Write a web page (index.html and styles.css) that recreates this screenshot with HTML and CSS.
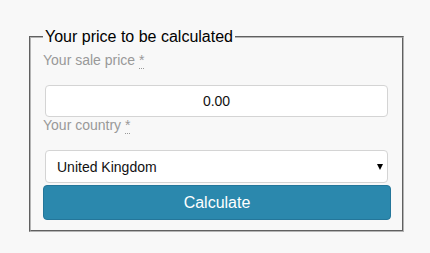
FILE: index.html
```
<!DOCTYPE html>
<html>
<head>
<meta charset="utf-8">
<link rel="stylesheet" href="styles.css">
</head>
<body>
<div class="page">
  <form class="calc">
    <fieldset class="box">
      <legend class="box-title">Your price to be calculated</legend>
      <label class="field-label" for="price">Your sale price <abbr class="req" title="required">*</abbr></label>
      <input class="field-input" id="price" type="text" value="0.00">
      <label class="field-label" for="country">Your country <abbr class="req" title="required">*</abbr></label>
      <div class="select-wrap">
        <select class="field-select" id="country">
          <option>United Kingdom</option>
        </select>
      </div>
      <button class="btn" type="button">Calculate</button>
    </fieldset>
  </form>
</div>
</body>
</html>
```
FILE: styles.css
```
html, body {
  margin: 0;
  padding: 0;
  background: #f8f8f8;
}
body {
  font-family: "Liberation Sans", Arial, sans-serif;
  width: 430px;
  height: 253px;
  overflow: hidden;
}
.page {
  padding: 28px 0 0 29px;
}
.calc {
  margin: 0;
}
.box {
  box-sizing: border-box;
  width: 375px;
  margin: 0;
  padding: 6px 11px 10px 12px;
  border: 2px groove #b4b4b4;
  min-width: 0;
}
.box-title {
  font-size: 16px;
  line-height: 18px;
  color: #000;
  padding: 0 2px;
  margin: 0;
}
.field-label {
  display: block;
  font-size: 14px;
  line-height: 16px;
  color: #999;
  margin-bottom: 17px;
}
.req {
  text-decoration: none;
  border-bottom: 1px dotted #999;
  cursor: help;
}
.field-input,
.field-select {
  box-sizing: border-box;
  display: block;
  width: 343px;
  margin: 0 0 0 2px;
  background: #fff;
  border: 1px solid #d4d4d4;
  border-radius: 4px;
  font-family: "Liberation Sans", Arial, sans-serif;
  font-size: 14px;
  color: #111;
  outline: none;
}
.field-input {
  height: 32px;
  text-align: center;
  padding: 0 10px;
}
.select-wrap {
  position: relative;
  margin-top: 1px;
}
.field-select {
  height: 33px;
  padding: 0 24px 0 11px;
  -webkit-appearance: none;
  appearance: none;
}
.select-wrap::after {
  content: "";
  position: absolute;
  left: 334px;
  top: 14px;
  border-left: 3.5px solid transparent;
  border-right: 3.5px solid transparent;
  border-top: 6px solid #000;
}
.btn {
  box-sizing: border-box;
  display: block;
  width: 348px;
  height: 35px;
  margin-top: 2px;
  background: #2b88ad;
  border: 1px solid #24769a;
  border-radius: 4px;
  color: #fff;
  font-family: "Liberation Sans", Arial, sans-serif;
  font-size: 16px;
  cursor: pointer;
}
```
